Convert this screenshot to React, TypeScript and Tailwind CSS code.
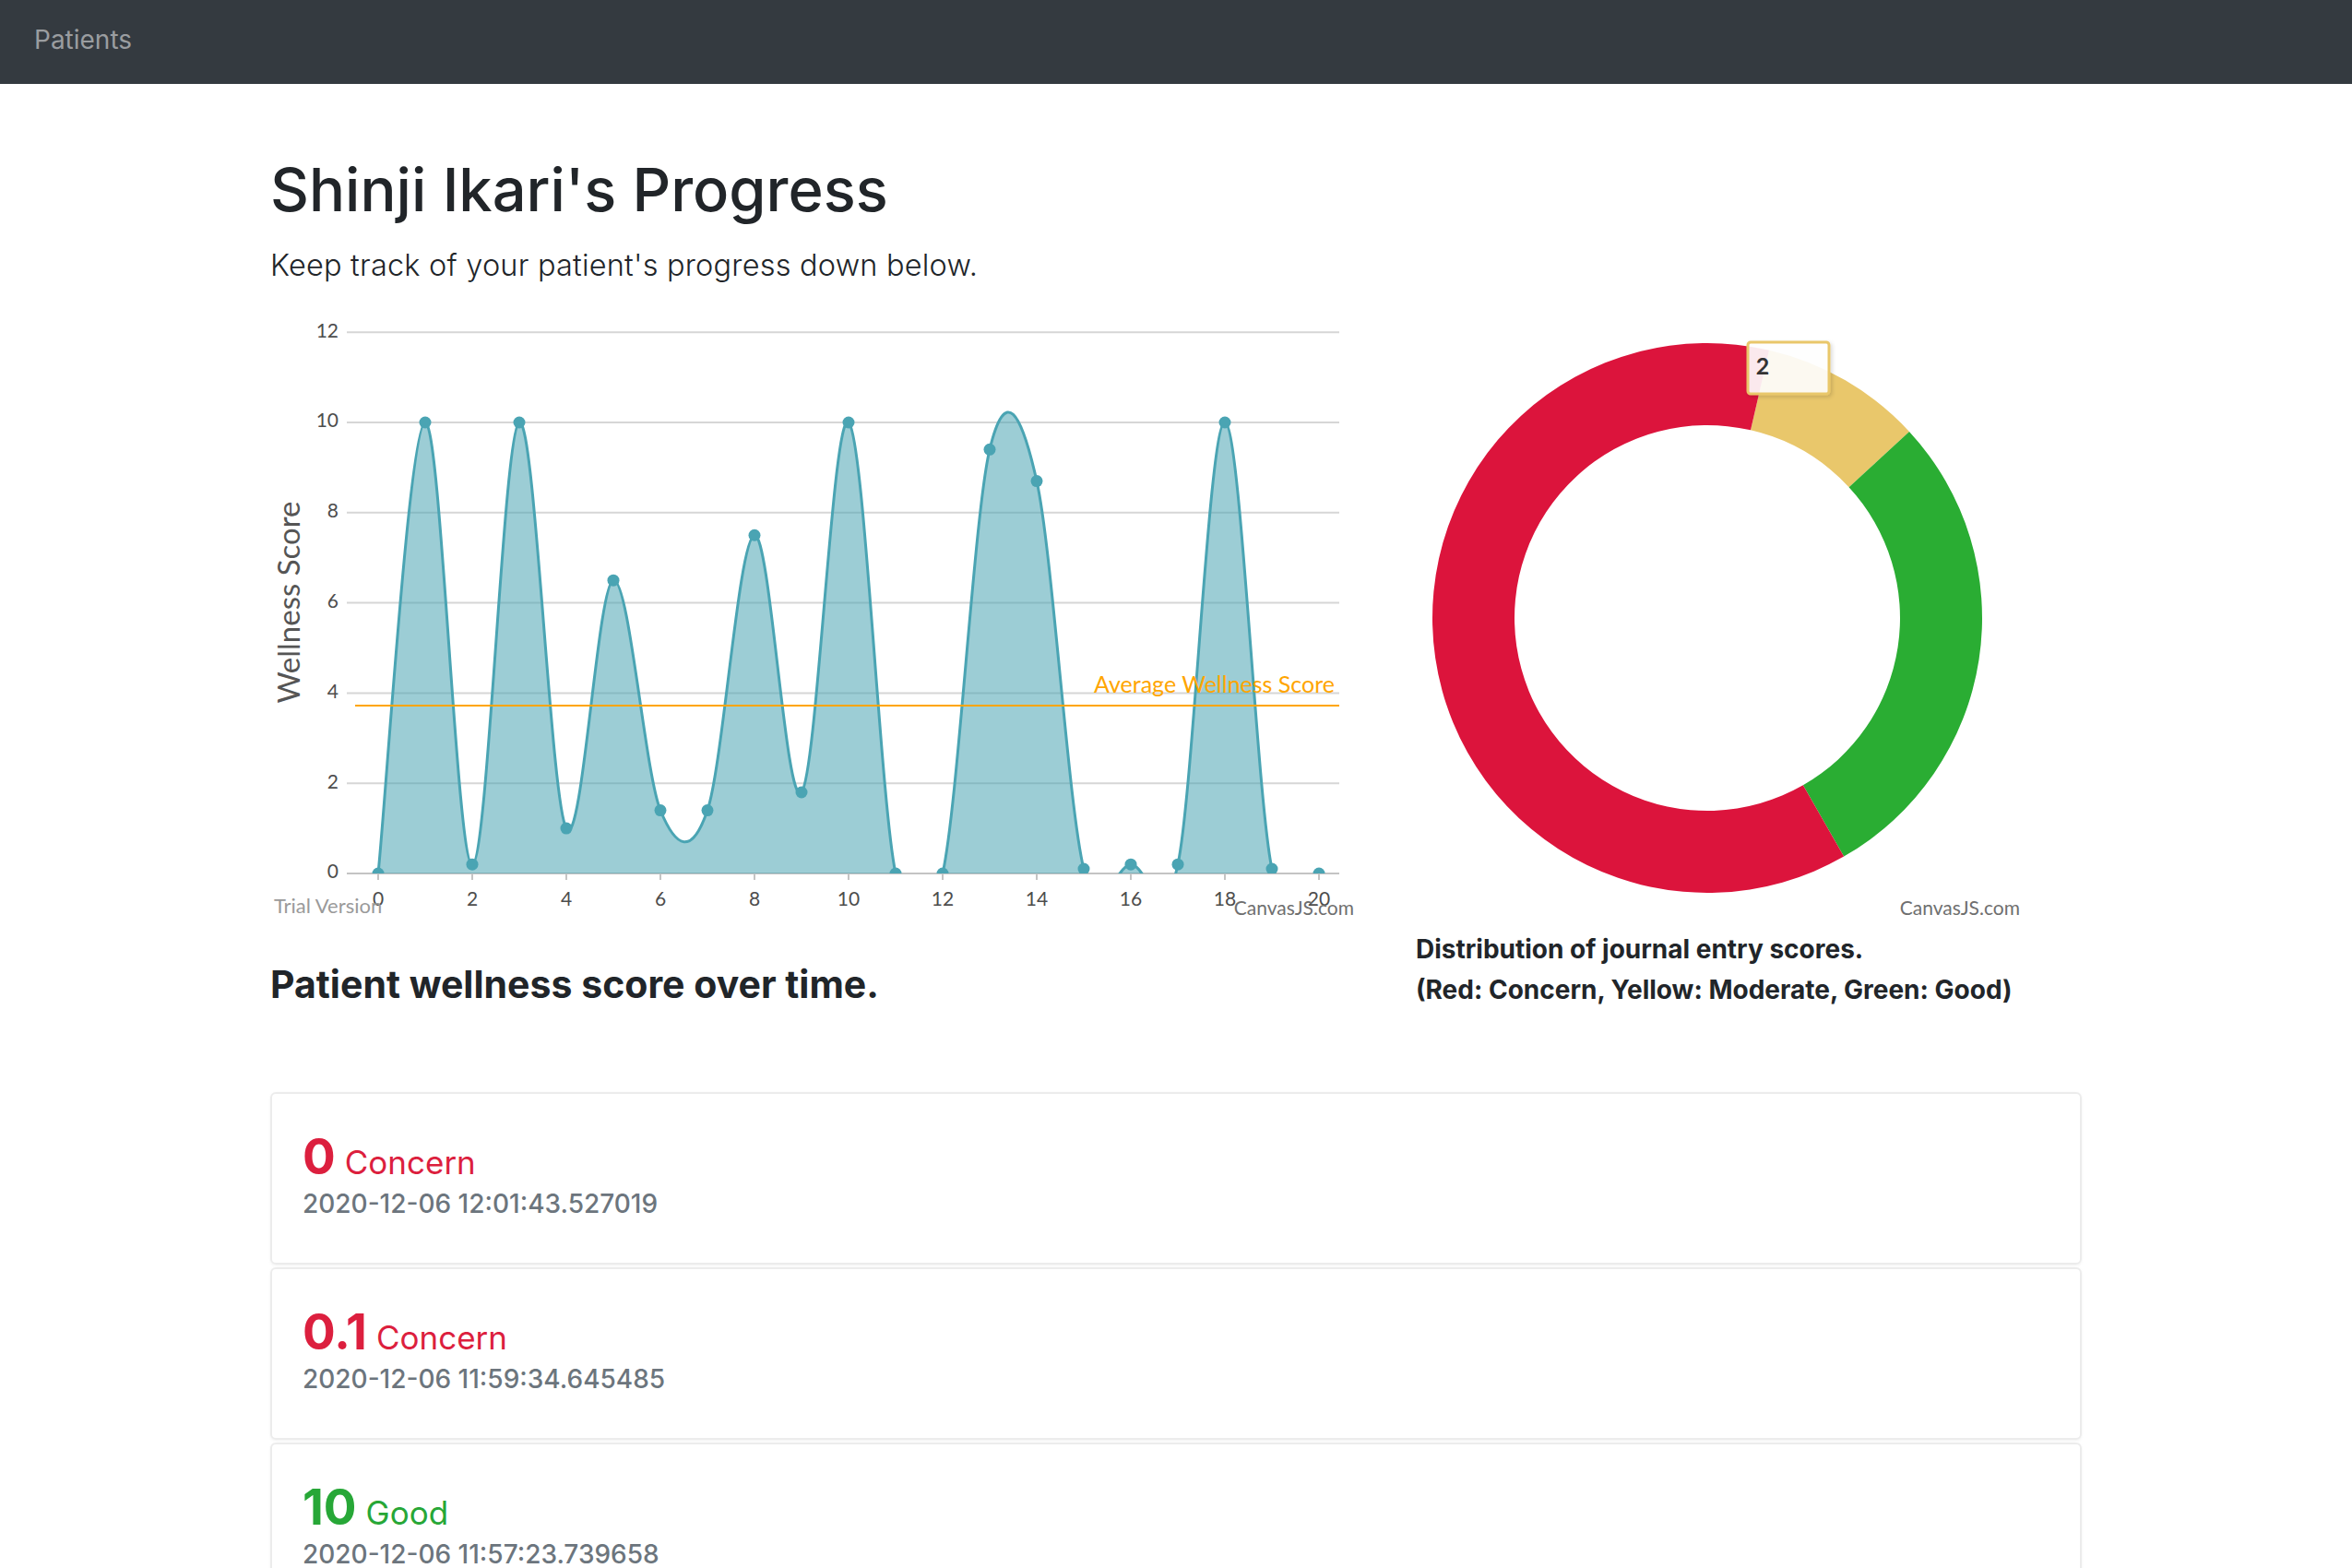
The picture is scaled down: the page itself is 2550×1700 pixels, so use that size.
import React from 'react';

const scores = [0, 10, 0.2, 10, 1, 6.5, 1.4, 1.4, 7.5, 1.8, 10, 0, 0, 9.4, 8.7, 0.1, 0.2, 0.2, 10, 0.1, 0];

const X = (v: number) => 117 + 51 * v;
const Y = (v: number) => 607 - 48.9 * v;

function splinePath(pts: number[][]) {
  let d = `M${pts[0][0]},${pts[0][1]}`;
  for (let i = 0; i < pts.length - 1; i++) {
    const p0 = pts[i - 1] || pts[i];
    const p1 = pts[i];
    const p2 = pts[i + 1];
    const p3 = pts[i + 2] || pts[i + 1];
    const c1x = p1[0] + (p2[0] - p0[0]) / 6;
    const c1y = p1[1] + (p2[1] - p0[1]) / 6;
    const c2x = p2[0] - (p3[0] - p1[0]) / 6;
    const c2y = p2[1] - (p3[1] - p1[1]) / 6;
    d += ` C${c1x},${c1y} ${c2x},${c2y} ${p2[0]},${p2[1]}`;
  }
  return d;
}

function WellnessChart() {
  const pts = scores.map((v, i) => [X(i), Y(v)]);
  const line = splinePath(pts);
  const area = `${line} L${X(20)},${Y(0)} L${X(0)},${Y(0)} Z`;
  const font = '"Lato", "Open Sans", sans-serif';
  return (
    <svg width="1180" height="660" className="block shrink-0">
      <defs>
        <clipPath id="plot">
          <rect x="83" y="0" width="1076" height="607" />
        </clipPath>
      </defs>
      {[0, 2, 4, 6, 8, 10, 12].map((v) => (
        <g key={v}>
          <line x1="83" x2="1159" y1={Y(v)} y2={Y(v)} stroke={v === 0 ? '#c4c4c4' : '#d6d6d6'} strokeWidth="2" />
          <text x="74" y={Y(v)} textAnchor="end" dominantBaseline="middle" fontFamily={font} fontSize="21" fill="#4d4d4d">
            {v}
          </text>
        </g>
      ))}
      {[0, 2, 4, 6, 8, 10, 12, 14, 16, 18, 20].map((v) => (
        <g key={v}>
          <line x1={X(v)} x2={X(v)} y1="607" y2="614" stroke="#c4c4c4" strokeWidth="2" />
          <text x={X(v)} y="637" textAnchor="middle" dominantBaseline="middle" fontFamily={font} fontSize="21" fill="#4d4d4d">
            {v}
          </text>
        </g>
      ))}
      <text
        x="24"
        y="313"
        transform="rotate(-90 24 313)"
        textAnchor="middle"
        dominantBaseline="middle"
        fontFamily={font}
        fontSize="33"
        fill="#555"
      >
        Wellness Score
      </text>
      <g clipPath="url(#plot)">
        <path d={area} fill="#4aa4b3" fillOpacity="0.55" />
        <path d={line} fill="none" stroke="#4aa4b3" strokeWidth="3" />
        {pts.map((p, i) => (
          <circle key={i} cx={p[0]} cy={p[1]} r="6.5" fill="#4aa4b3" />
        ))}
      </g>
      <line x1="92" x2="1159" y1={Y(3.72)} y2={Y(3.72)} stroke="#ffa500" strokeWidth="2" />
      <text x="1154" y="405" textAnchor="end" dominantBaseline="middle" fontFamily={font} fontSize="25" fill="#ffa500">
        Average Wellness Score
      </text>
      <text x="4" y="644" dominantBaseline="middle" fontFamily={font} fontSize="22" fill="#9a9a9a">
        Trial Version
      </text>
      <text x="1175" y="647" textAnchor="end" dominantBaseline="middle" fontFamily={font} fontSize="21" fill="#6f6f6f">
        CanvasJS.com
      </text>
    </svg>
  );
}

function arc(cx: number, cy: number, R: number, r: number, a0: number, a1: number) {
  const rad = (a: number) => ((a - 90) * Math.PI) / 180;
  const pt = (rr: number, a: number) => `${cx + rr * Math.cos(rad(a))},${cy + rr * Math.sin(rad(a))}`;
  const large = a1 - a0 > 180 ? 1 : 0;
  return `M${pt(R, a0)} A${R},${R} 0 ${large} 1 ${pt(R, a1)} L${pt(r, a1)} A${r},${r} 0 ${large} 0 ${pt(r, a0)} Z`;
}

function DistributionChart() {
  const cx = 316;
  const cy = 330;
  const font = '"Lato", "Open Sans", sans-serif';
  return (
    <svg width="700" height="660" className="block">
      <defs>
        <filter id="tipShadow" x="-20%" y="-20%" width="150%" height="150%">
          <feDropShadow dx="2" dy="2" stdDeviation="2" floodColor="#000" floodOpacity="0.15" />
        </filter>
      </defs>
      <path d={arc(cx, cy, 298, 209, 13, 47.3)} fill="#e9c76b" />
      <path d={arc(cx, cy, 298, 209, 47.3, 150.2)} fill="#2aad33" />
      <path d={arc(cx, cy, 298, 209, 150.2, 373)} fill="#dc143c" />
      <rect x="360" y="31" width="88" height="56" rx="3" fill="#fff" fillOpacity="0.9" stroke="#e9c76b" strokeWidth="3" filter="url(#tipShadow)" />
      <text x="376" y="60" textAnchor="middle" dominantBaseline="middle" fontFamily={font} fontWeight="700" fontSize="25" fill="#333">
        2
      </text>
      <text x="655" y="647" textAnchor="end" dominantBaseline="middle" fontFamily={font} fontSize="21" fill="#6f6f6f">
        CanvasJS.com
      </text>
    </svg>
  );
}

const entries = [
  { score: '0', label: 'Concern', color: 'text-[#dc1f3e]', time: '2020-12-06 12:01:43.527019' },
  { score: '0.1', label: 'Concern', color: 'text-[#dc1f3e]', time: '2020-12-06 11:59:34.645485' },
  { score: '10', label: 'Good', color: 'text-[#27a737]', time: '2020-12-06 11:57:23.739658' },
  { score: '10', label: 'Good', color: 'text-[#27a737]', time: '2020-12-06 11:55:12.418233' },
];

export default function App() {
  return (
    <div className="min-h-screen bg-white text-[#212529] font-['Inter','Liberation_Sans',sans-serif]">
      <nav className="h-[91px] bg-[#343a40] flex items-center pl-[37px] pb-[6px]">
        <span className="text-[28px] text-[#9a9da0]">Patients</span>
      </nav>

      <main className="w-[1964px] mx-auto">
        <h1 className="mt-[76px] text-[65px] leading-[78px] font-medium">Shinji Ikari's Progress</h1>
        <p className="mt-[18px] text-[32.5px] leading-[49px] font-light tracking-[0.2px]">
          Keep track of your patient's progress down below.
        </p>

        <div className="mt-[28px] flex items-start gap-[62px]">
          <div>
            <WellnessChart />
            <h4 className="mt-[43px] text-[41px] leading-[48px] font-bold">Patient wellness score over time.</h4>
          </div>
          <div>
            <DistributionChart />
            <p className="mt-[7px] text-[28px] leading-[44px] font-bold">
              Distribution of journal entry scores.
              <br />
              (Red: Concern, Yellow: Moderate, Green: Good)
            </p>
          </div>
        </div>

        <div className="mt-[89px] flex flex-col gap-[3px]">
          {entries.map((e, i) => (
            <div
              key={i}
              className="h-[187px] rounded-[6px] border-2 border-[#ececec] shadow-[0_1px_3px_rgba(0,0,0,0.06)] px-[33px] pt-[37px]"
            >
              <div className={`h-[62px] leading-[62px] ${e.color}`}>
                <span className="text-[53px] font-bold">{e.score}</span>
                <span className="text-[35px] ml-[10px]">{e.label}</span>
              </div>
              <div className="text-[28px] leading-[40px] font-medium text-[#6c757d]">{e.time}</div>
            </div>
          ))}
        </div>
      </main>
    </div>
  );
}
